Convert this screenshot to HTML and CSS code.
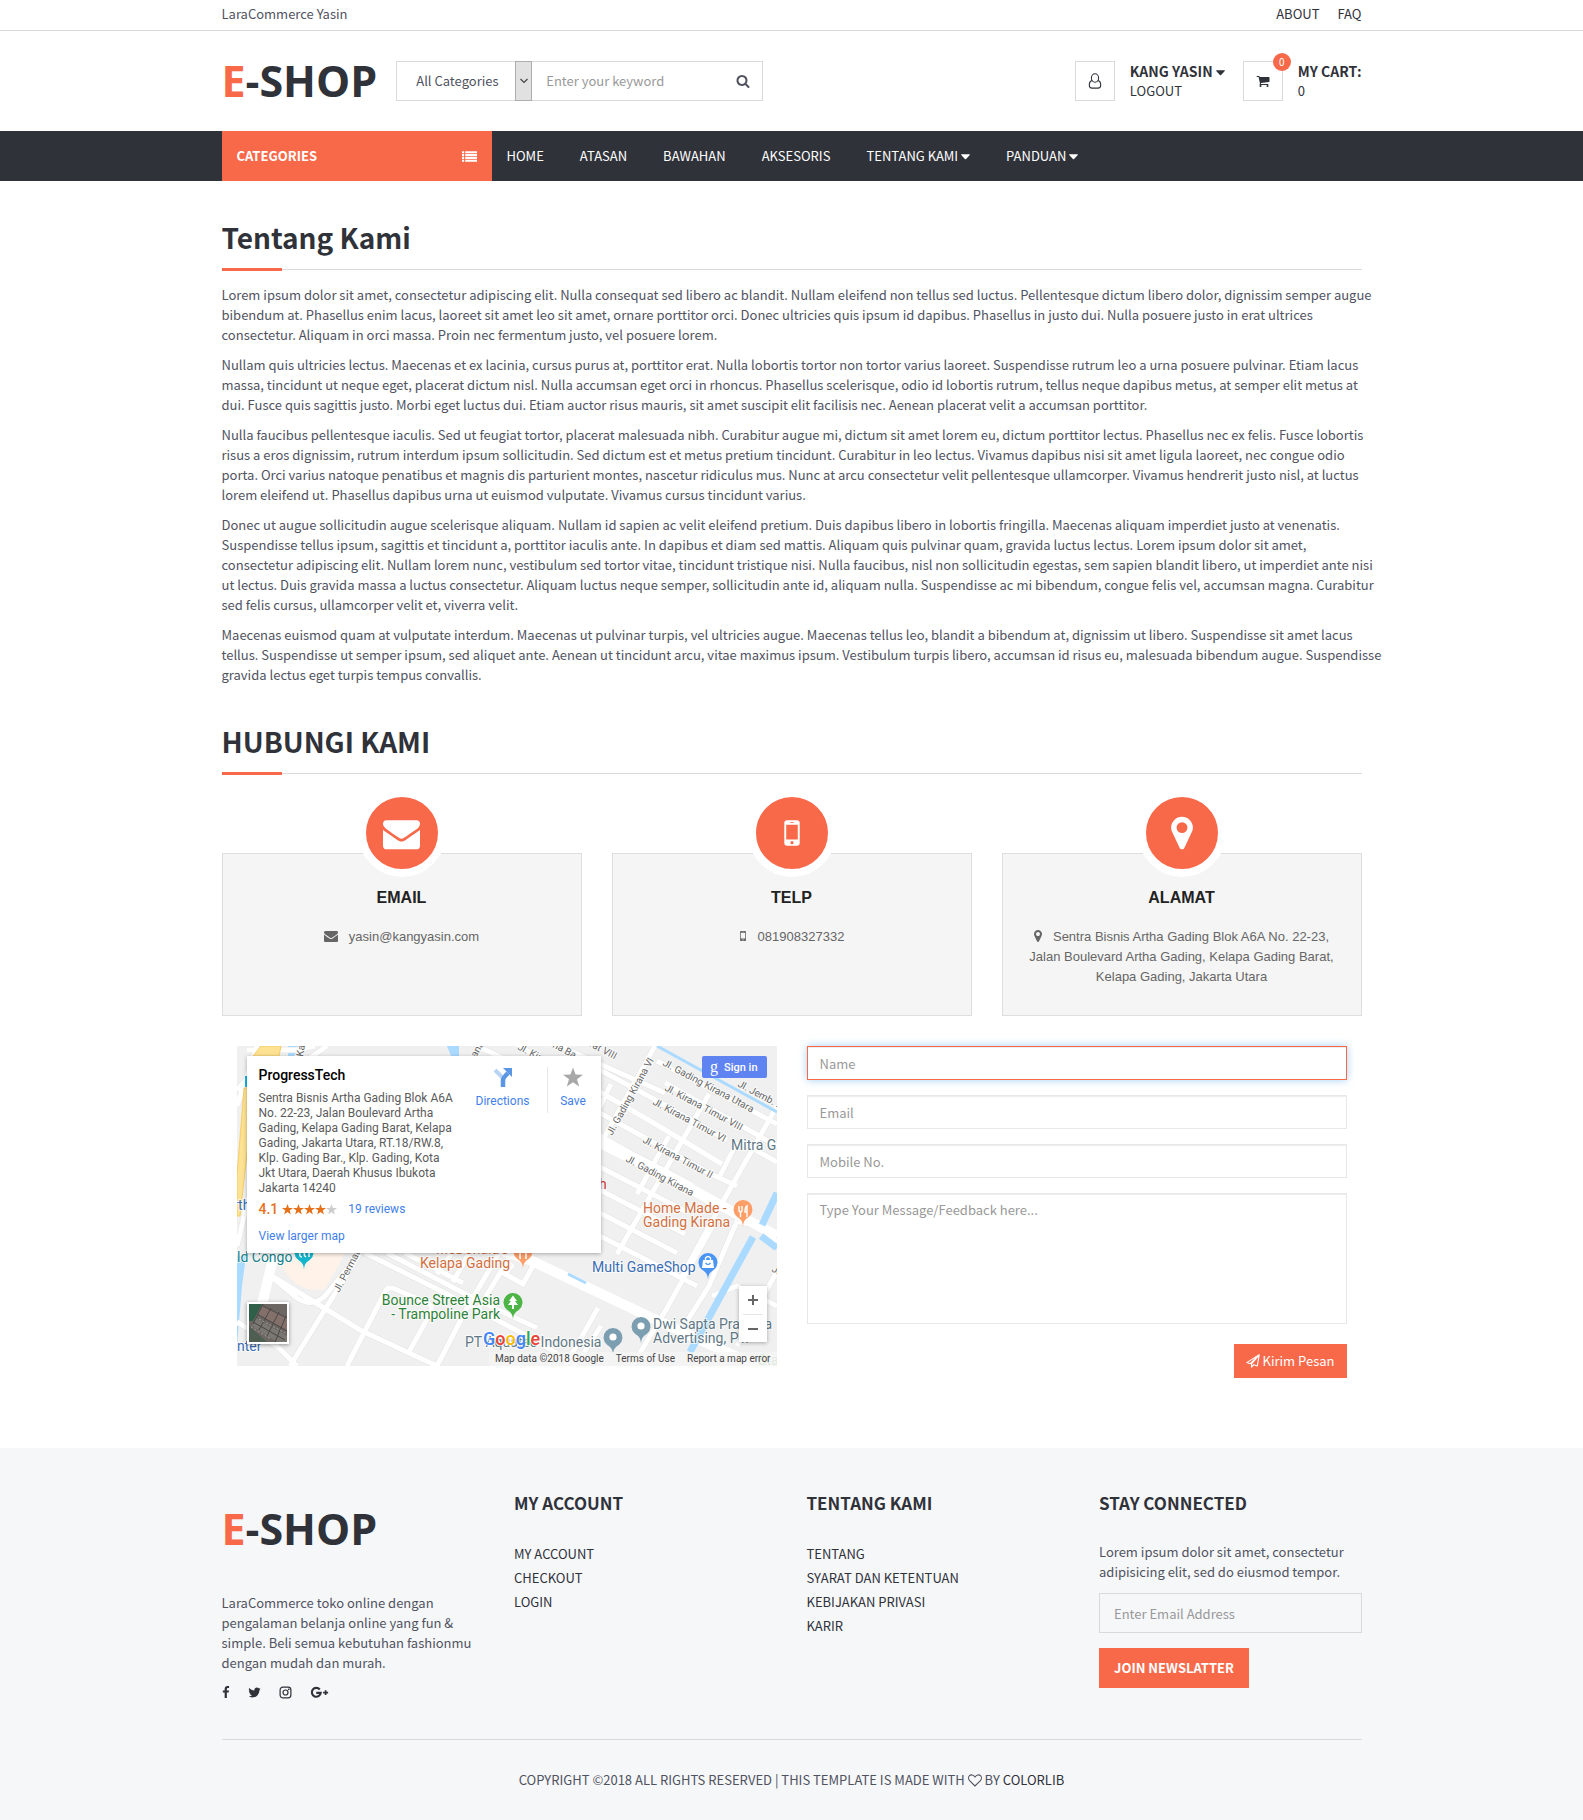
FILE: index.html
```html
<!DOCTYPE html>
<html lang="id">
<head>
<meta charset="utf-8">
<meta name="viewport" content="width=device-width, initial-scale=1">
<title>E-SHOP | Tentang Kami</title>
<link rel="stylesheet" href="styles.css">
</head>
<body>
<svg class="sprite" aria-hidden="true">
  <symbol id="i-search" viewBox="0 0 1792 1792"><path d="M1216 832q0-185-131.500-316.500t-316.500-131.500-316.500 131.500-131.500 316.500 131.500 316.500 316.500 131.500 316.500-131.500 131.500-316.500zm512 832q0 52-38 90t-90 38q-54 0-90-38l-343-342q-179 124-399 124-143 0-273.500-55.500t-225-150-150-225-55.500-273.500 55.500-273.500 150-225 225-150 273.500-55.500 273.500 55.500 225 150 150 225 55.500 273.500q0 220-124 399l343 343q37 37 37 90z"/></symbol>
  <symbol id="i-cart" viewBox="0 0 1792 1792"><path d="M704 1536q0 52-38 90t-90 38-90-38-38-90 38-90 90-38 90 38 38 90zm896 0q0 52-38 90t-90 38-90-38-38-90 38-90 90-38 90 38 38 90zm128-1088v512q0 24-16.500 42.500t-40.500 21.500l-1044 122q13 60 13 70 0 16-24 64h920q26 0 45 19t19 45-19 45-45 19h-1024q-26 0-45-19t-19-45q0-11 8-31.500t16-36 21.500-40 15.500-29.500l-177-823h-204q-26 0-45-19t-19-45 19-45 45-19h256q16 0 28.500 6.500t19.500 15.500 13 24.500 8 26 5.500 29.500 4.500 26h1201q26 0 45 19t19 45z"/></symbol>
  <symbol id="i-envelope" viewBox="0 0 1792 1792"><path d="M1792 710v794q0 66-47 113t-113 47h-1472q-66 0-113-47t-47-113v-794q44 49 101 87 362 246 497 345 57 42 92.500 65.500t94.500 48 110 24.500h2q51 0 110-24.500t94.500-48 92.500-65.500q170-123 498-345 57-39 100-87zm0-294q0 79-49 151t-122 123q-376 261-468 325-10 7-42.500 30.500t-54 38-52 32.500-57.500 27-50 9h-2q-23 0-50-9t-57.500-27-52-32.500-54-38-42.500-30.500q-91-64-262-182.500t-205-142.500q-62-42-117-115.500t-55-136.500q0-78 41.500-130t118.500-52h1472q65 0 112.500 47t47.500 113z"/></symbol>
  <symbol id="i-marker" viewBox="0 0 1792 1792"><path d="M1152 640q0-106-75-181t-181-75-181 75-75 181 75 181 181 75 181-75 75-181zm256 0q0 109-33 179l-364 774q-16 33-47.500 52t-67.500 19-67.500-19-46.500-52l-365-774q-33-70-33-179 0-212 150-362t362-150 362 150 150 362z"/></symbol>
  <symbol id="i-mobile" viewBox="0 0 1792 1792"><path fill-rule="evenodd" d="M640 256h512q52 0 90 38t38 90v1024q0 52-38 90t-90 38h-512q-52 0-90-38t-38-90v-1024q0-52 38-90t90-38zm-16 224q-16 0-16 16v704q0 16 16 16h544q16 0 16-16v-704q0-16-16-16zm272 816a80 80 0 1 0 0 160 80 80 0 1 0 0-160zm-80-944q-16 0-16 16t16 16h160q16 0 16-16t-16-16z"/></symbol>
  <symbol id="i-list" viewBox="0 0 14 10"><path d="M0 0h2v2H0zM3 0h11v2H3zM0 2.700h2v2H0zM3 2.700h11v2H3zM0 5.400h2v2H0zM3 5.400h11v2H3zM0 8h2v2H0zM3 8h11v2H3z"/></symbol>
  <symbol id="i-caret" viewBox="0 0 8 5"><path d="M.5 0h7q.7.2.3.8L4.500 4.300q-.5.400-1 0L.2.800Q-.2.200.5 0z"/></symbol>
  <symbol id="i-user" viewBox="0 0 14 16"><g fill="none" stroke="currentColor" stroke-width="1.100"><ellipse cx="7" cy="5" rx="3.600" ry="4.200"/><path d="M4.200 7.600C2.300 7.800 1.300 9.600 1.300 12.200c0 1.700 1 2.900 2.700 2.900h6c1.700 0 2.700-1.200 2.700-2.900 0-2.600-1-4.400-2.900-4.600"/></g></symbol>
  <symbol id="i-facebook" viewBox="480 0 880 1792"><path d="M1343 12v264h-157q-86 0-116 36t-30 108v189h293l-39 296h-254v759h-306v-759h-255v-296h255v-218q0-186 104-288.500t277-102.500q147 0 228 12z"/></symbol>
  <symbol id="i-twitter" viewBox="64 192 1664 1408"><path d="M1684 408q-67 98-162 167 1 14 1 42 0 130-38 259.500t-115.500 248.500-184.500 210.500-258 146-323 54.500q-271 0-496-145 35 4 78 4 225 0 401-138-105-2-188-64.500t-114-159.500q33 5 61 5 43 0 85-11-112-23-185.500-111.500t-73.500-205.500v-4q68 38 146 41-66-44-105-115t-39-154q0-88 44-163 121 149 294.500 238.500t371.500 99.500q-8-38-8-74 0-134 94.500-228.500t228.500-94.500q140 0 236 102 109-21 205-78-37 115-142 178 93-10 186-50z"/></symbol>
  <symbol id="i-instagram" viewBox="0 0 14 14"><g fill="none" stroke="currentColor" stroke-width="1.300"><rect x="1.200" y="1.200" width="11.600" height="11.600" rx="3"/><circle cx="7" cy="7" r="2.700"/></g><circle cx="10.500" cy="3.600" r=".9"/></symbol>
  <symbol id="i-gplus" viewBox="0 0 20 14"><path d="M10.300 3.800A4.800 4.800 0 1 0 11.300 7.400H6.500" fill="none" stroke="currentColor" stroke-width="2.300"/><path d="M15.700 4.500h1.800v1.800h1.800v1.700h-1.800v1.800h-1.800V8h-1.800V6.300h1.800z"/></symbol>
  <symbol id="i-heart" viewBox="0 0 14 13"><path d="M7 12 1.600 6.700C.2 5.200.300 2.900 1.500 1.700 3 .3 5.300.600 7 3 8.700.600 11 .300 12.500 1.700c1.200 1.200 1.300 3.500-.1 5z" fill="none" stroke="currentColor" stroke-width="1.100"/></symbol>
  <symbol id="i-plane" viewBox="0 0 14 14"><path d="M.8 8.600 13.200.8 11.300 12 7.800 10.700 5.600 13.200V9.800L13.200.8 4.200 9.700z" fill="none" stroke="currentColor" stroke-width="1.100" stroke-linejoin="round"/></symbol>
</svg>

<div class="topbar">
  <div class="container topbar-row">
    <span>LaraCommerce Yasin</span>
    <nav class="top-links"><a href="#">ABOUT</a><a href="#">FAQ</a></nav>
  </div>
</div>

<header class="container header">
  <a class="logo" href="#"><span>E</span>-SHOP</a>
  <form class="search">
    <label class="sr" for="cat">Kategori</label>
    <div class="search-cat">
      <select id="cat"><option>All Categories</option></select>
      <span class="search-arrow"><svg width="8" height="6" viewBox="0 0 8 6"><path d="M.5 1 4 4.500 7.500 1" fill="none" stroke="#444" stroke-width="1.200"/></svg></span>
    </div>
    <label class="sr" for="q">Kata kunci</label>
    <input id="q" type="text" placeholder="Enter your keyword">
    <button type="button" aria-label="Search"><svg width="14" height="14"><use href="#i-search"/></svg></button>
  </form>
  <div class="account">
    <div class="account-item">
      <a class="icon-box" href="#" aria-label="Account"><svg width="14" height="16"><use href="#i-user"/></svg></a>
      <div><a class="strong" href="#">KANG YASIN <svg class="caret" width="9" height="6"><use href="#i-caret"/></svg></a><a href="#">LOGOUT</a></div>
    </div>
    <div class="account-item">
      <a class="icon-box" href="#" aria-label="Cart"><svg width="14" height="14"><use href="#i-cart"/></svg><span class="badge">0</span></a>
      <div><a class="strong" href="#">MY CART:</a><span>0</span></div>
    </div>
  </div>
</header>

<div class="navbar">
  <div class="container navbar-row">
    <a class="nav-cat" href="#">CATEGORIES <svg width="15" height="11"><use href="#i-list"/></svg></a>
    <nav class="nav-links">
      <a href="#">HOME</a><a href="#">ATASAN</a><a href="#">BAWAHAN</a><a href="#">AKSESORIS</a>
      <a href="#">TENTANG KAMI <svg class="caret" width="9" height="6"><use href="#i-caret"/></svg></a>
      <a href="#">PANDUAN <svg class="caret" width="9" height="6"><use href="#i-caret"/></svg></a>
    </nav>
  </div>
</div>

<main class="container main">
  <h2 class="title">Tentang Kami</h2>
  <div class="prose">
    <p>Lorem ipsum dolor sit amet, consectetur adipiscing elit. Nulla consequat sed libero ac blandit. Nullam eleifend non tellus sed luctus. Pellentesque dictum libero dolor, dignissim semper augue<br>bibendum at. Phasellus enim lacus, laoreet sit amet leo sit amet, ornare porttitor orci. Donec ultricies quis ipsum id dapibus. Phasellus in justo dui. Nulla posuere justo in erat ultrices<br>consectetur. Aliquam in orci massa. Proin nec fermentum justo, vel posuere lorem.</p>
    <p>Nullam quis ultricies lectus. Maecenas et ex lacinia, cursus purus at, porttitor erat. Nulla lobortis tortor non tortor varius laoreet. Suspendisse rutrum leo a urna posuere pulvinar. Etiam lacus<br>massa, tincidunt ut neque eget, placerat dictum nisl. Nulla accumsan eget orci in rhoncus. Phasellus scelerisque, odio id lobortis rutrum, tellus neque dapibus metus, at semper elit metus at<br>dui. Fusce quis sagittis justo. Morbi eget luctus dui. Etiam auctor risus mauris, sit amet suscipit elit facilisis nec. Aenean placerat velit a accumsan porttitor.</p>
    <p>Nulla faucibus pellentesque iaculis. Sed ut feugiat tortor, placerat malesuada nibh. Curabitur augue mi, dictum sit amet lorem eu, dictum porttitor lectus. Phasellus nec ex felis. Fusce lobortis<br>risus a eros dignissim, rutrum interdum ipsum sollicitudin. Sed dictum est et metus pretium tincidunt. Curabitur in leo lectus. Vivamus dapibus nisi sit amet ligula laoreet, nec congue odio<br>porta. Orci varius natoque penatibus et magnis dis parturient montes, nascetur ridiculus mus. Nunc at arcu consectetur velit pellentesque ullamcorper. Vivamus hendrerit justo nisl, at luctus<br>lorem eleifend ut. Phasellus dapibus urna ut euismod vulputate. Vivamus cursus tincidunt varius.</p>
    <p>Donec ut augue sollicitudin augue scelerisque aliquam. Nullam id sapien ac velit eleifend pretium. Duis dapibus libero in lobortis fringilla. Maecenas aliquam imperdiet justo at venenatis.<br>Suspendisse tellus ipsum, sagittis et tincidunt a, porttitor iaculis ante. In dapibus et diam sed mattis. Aliquam quis pulvinar quam, gravida luctus lectus. Lorem ipsum dolor sit amet,<br>consectetur adipiscing elit. Nullam lorem nunc, vestibulum sed tortor vitae, tincidunt tristique nisi. Nulla faucibus, nisl non sollicitudin egestas, sem sapien blandit libero, ut imperdiet ante nisi<br>ut lectus. Duis gravida massa a luctus consectetur. Aliquam luctus neque semper, sollicitudin ante id, aliquam nulla. Suspendisse ac mi bibendum, congue felis vel, accumsan magna. Curabitur<br>sed felis cursus, ullamcorper velit et, viverra velit.</p>
    <p>Maecenas euismod quam at vulputate interdum. Maecenas ut pulvinar turpis, vel ultricies augue. Maecenas tellus leo, blandit a bibendum at, dignissim ut libero. Suspendisse sit amet lacus<br>tellus. Suspendisse ut semper ipsum, sed aliquet ante. Aenean ut tincidunt arcu, vitae maximus ipsum. Vestibulum turpis libero, accumsan id risus eu, malesuada bibendum augue. Suspendisse<br>gravida lectus eget turpis tempus convallis.</p>
  </div>

  <h2 class="title title-second">HUBUNGI KAMI</h2>
  <div class="cards">
    <section class="card">
      <div class="disc"><svg width="37" height="37"><use href="#i-envelope"/></svg></div>
      <h3>EMAIL</h3>
      <p><svg width="14" height="14"><use href="#i-envelope"/></svg>yasin@kangyasin.com</p>
    </section>
    <section class="card">
      <div class="disc"><svg width="36" height="36"><use href="#i-mobile"/></svg></div>
      <h3>TELP</h3>
      <p><svg class="narrow" width="14" height="14"><use href="#i-mobile"/></svg>081908327332</p>
    </section>
    <section class="card">
      <div class="disc"><svg width="38" height="38"><use href="#i-marker"/></svg></div>
      <h3>ALAMAT</h3>
      <p><svg class="narrow" width="14" height="14"><use href="#i-marker"/></svg>Sentra Bisnis Artha Gading Blok A6A No. 22-23, Jalan Boulevard Artha Gading, Kelapa Gading Barat, Kelapa Gading, Jakarta Utara</p>
    </section>
  </div>

  <div class="contact">
    <div class="map">
      <svg class="map-art" viewBox="0 0 540 320" preserveAspectRatio="xMidYMid slice">
        <defs>
          <symbol id="pin" viewBox="0 0 20 27" overflow="visible"><path d="M10 26.500C9.600 21 7.800 19.200 4 16.800A9.500 9.500 0 1 1 16 16.800C12.200 19.200 10.400 21 10 26.500z"/></symbol>
          <g id="roads">
            <path d="M123 207 53 320M30 227 123 284 200 320M123 207 88 250Q75 262 60 252L30 227"/>
            <path d="M128 207 210 248 300 295 340 320M150 207 240 254 300 282M110 320 148 246Q150 240 158 243L192 258Q196 261 194 266L172 306M0 276 40 300 60 320"/>
            <path d="M168 207 226 237M215 207 200 228M232 207 216 236M262 207 230 262 200 320M272 212 242 262M276 218 268 228 286 238 296 220"/>
            <path d="M0 60 20 0M0 200 12 150M10 4H60L78 0M70 14 90 0M0 44 40 0"/>
            <path d="M300-10 428 47M420 15 540 78M428 37 540 100M363 24 415 52 490 94M363 46 415 76 485 118M363 67 405 90 474 128 500 140"/>
            <path d="M363 90 388 104 455 139M363 121 450 166M363 144 448 188M363 167 440 207M363 190 460 240M280 0 363 40M240 0 300 28"/>
            <path d="M418 0 364 97M374 38 350 88M472 48 380 208M500 96 482 132M540 60 480 166 445 230M504 96 540 116M432 90 400 148"/>
            <path d="M480 172 430 262 395 320M540 196 520 180 500 175 472 240 450 275M364 280 345 310M361 262 328 320M540 260 500 240 475 250M540 225 500 300"/>
          </g>
        </defs>
        <rect width="540" height="320" fill="#f0f0f0"/>
        <path d="M77 207h30l-3 8-16 28q-20 4-34-10l-12-16z" fill="#fff2e8"/>
        <path d="M0 210h9l-4 30-5 60zM51 0h12l-6 10h-6zM210 0h12v10h-8z" fill="#aadaff"/>
        <use href="#roads" fill="none" stroke="#e3e3e3" stroke-width="6"/>
        <use href="#roads" fill="none" stroke="#fff" stroke-width="5"/>
        <path d="M363 97 443 137 540 190M293 214 413 271 463 294 520 320M38 204 14 305M250 200 293 214" fill="none" stroke="#fff" stroke-width="10"/>
        <path d="M11 42V98L3 170H0V130L7 42zM16 10 24 0H44L42 10z" fill="#fde293" stroke="#f6cd67"/>
        <path d="M540 147 525 179M516 191 453 306M524 190 540 202" fill="none" stroke="#aadaff" stroke-width="7"/>
        <path d="M420 0 540 66M331 228 349 237" fill="none" stroke="#aadaff" stroke-width="3"/>
        <path d="M8 30h3v11H8z" fill="#13b5ea"/>
        <g class="street">
          <text transform="translate(375 90) rotate(-61)">Jl. Gading Kirana VI</text>
          <text transform="translate(425 19) rotate(28)">Jl. Gading Kirana Utara</text>
          <text transform="translate(427 44) rotate(28)">Jl. Kirana Timur VIII</text>
          <text transform="translate(415 58) rotate(28)">Jl. Kirana Timur VI</text>
          <text transform="translate(405 96) rotate(28)">Jl. Kirana Timur II</text>
          <text transform="translate(388 115) rotate(28)">Jl. Gading Kirana</text>
          <text transform="translate(500 40) rotate(28)">Jl. Jemb. ..</text>
          <text transform="translate(102 247) rotate(-62)">Jl. Permata</text>
          <text transform="translate(280 3) rotate(28)">Jl. Kir</text>
          <text transform="translate(315 1) rotate(28)">na Ba</text>
          <text transform="translate(352 0) rotate(28)">rat VIII</text>
          <text transform="translate(66 11) rotate(-80)">Kay</text>
          <text transform="translate(239 12) rotate(-60)">ana</text>
          <text transform="translate(534 225) rotate(28)">Jl</text>
        </g>
        <g class="place">
          <g fill="#d2703f"><text x="406" y="167">Home Made -</text><text x="406" y="181">Gading Kirana</text><text x="199" y="208">McDonald's</text><text x="183" y="222">Kelapa Gading</text></g>
          <g fill="#3a6db5"><text x="355" y="226">Multi GameShop</text><text x="0" y="305">nter</text><text x="-4" y="164">rth</text></g>
          <g fill="#2d8237"><text x="263" y="259" text-anchor="end">Bounce Street Asia</text><text x="263" y="273" text-anchor="end">- Trampoline Park</text></g>
          <g fill="#5f7885"><text x="494" y="104">Mitra G</text><text x="416" y="283">Dwi Sapta Pratama</text><text x="416" y="297">Advertising, PT.</text><text x="228" y="301">PT Aquatec Indonesia</text></g>
          <text x="0" y="216" fill="#14808b">ld Congo</text>
          <text x="362" y="143" fill="#c5322d">h</text>
          <text x="521" y="319" fill="#a5cfa9">Sta</text>
        </g>
        <use href="#pin" x="496" y="154" width="20" height="27" fill="#ff9e67"/>
        <path d="M502 160v4q0 2 1.500 2v5M505 160v4q0 2-1.500 2M510 171v-11q-2 1-2 6h2" fill="none" stroke="#fff" stroke-width="1.400"/>
        <use href="#pin" x="276" y="196" width="20" height="27" fill="#ff9e67"/>
        <path d="M283 202v11M289 202v11" stroke="#fff" stroke-width="1.600"/>
        <use href="#pin" x="461" y="207" width="20" height="27" fill="#4a94f3"/>
        <path d="M466 214h10l1 8h-12z" fill="#fff"/><path d="M468.500 214v-2q2.500-3 5 0v2" fill="none" stroke="#fff" stroke-width="1.300"/><path d="M468.500 217q2.500 3 5 0" fill="none" stroke="#4a94f3" stroke-width="1.200"/>
        <use href="#pin" x="266" y="247" width="20" height="27" fill="#4db546"/>
        <path d="M276 249.500 280 255h-2l3 4h-4v4h-2v-4h-4l3-4h-2z" fill="#fff"/>
        <use href="#pin" x="394" y="271" width="20" height="27" fill="#7b9eb0"/><circle cx="404" cy="280" r="3.600" fill="#fff"/>
        <use href="#pin" x="366" y="282" width="20" height="27" fill="#7b9eb0"/><circle cx="376" cy="291" r="3.600" fill="#fff"/>
        <use href="#pin" x="57" y="197" width="20" height="27" fill="#12b5cb"/><path d="M63 207q-1 4 2 4m3-5q-2 3 1 5m3-5v5" fill="none" stroke="#fff" stroke-width="1.500"/>
        <g class="glogo"><text x="246" y="299"><tspan fill="#4285f4">G</tspan><tspan fill="#ea4335">o</tspan><tspan fill="#fbbc05">o</tspan><tspan fill="#4285f4">g</tspan><tspan fill="#34a853">l</tspan><tspan fill="#ea4335">e</tspan></text></g>
      </svg>

      <div class="place-card">
        <div class="place-info">
          <h3>ProgressTech</h3>
          <p>Sentra Bisnis Artha Gading Blok A6A<br>No. 22-23, Jalan Boulevard Artha<br>Gading, Kelapa Gading Barat, Kelapa<br>Gading, Jakarta Utara, RT.18/RW.8,<br>Klp. Gading Bar., Klp. Gading, Kota<br>Jkt Utara, Daerah Khusus Ibukota<br>Jakarta 14240</p>
          <div class="rating"><b>4.1</b>
            <svg width="55" height="11" viewBox="0 0 55 11"><defs><path id="star" d="M5.500 0 6.900 3.900 11 4 7.700 6.500 8.900 10.500 5.500 8.100 2.100 10.500 3.300 6.500 0 4 4.100 3.900z"/></defs><g fill="#e7711b"><use href="#star"/><use href="#star" x="11"/><use href="#star" x="22"/><use href="#star" x="33"/></g><use href="#star" x="44" fill="#ccc"/></svg>
            <a href="#">19 reviews</a>
          </div>
          <a href="#">View larger map</a>
        </div>
        <a class="place-action" href="#"><svg width="20" height="20" viewBox="0 0 20 20"><path d="M2 3 10 11" stroke="#b9d3f5" stroke-width="4"/><path d="M10 20v-7q0-2 5-7" fill="none" stroke="#5a96e3" stroke-width="4.500"/><path d="M10 1h9v9z" fill="#5a96e3"/></svg>Directions</a>
        <a class="place-action place-save" href="#"><svg width="20" height="20" viewBox="0 0 11 10.500"><use href="#star" fill="#a8a8a8"/></svg>Save</a>
      </div>
      <button class="signin" type="button"><span>g</span>Sign in</button>
      <div class="map-zoom"><button type="button" aria-label="Zoom in"><svg width="10" height="10"><path d="M5 0v10M0 5h10" stroke="#666" stroke-width="2"/></svg></button><button type="button" aria-label="Zoom out"><svg width="10" height="10"><path d="M0 5h10" stroke="#666" stroke-width="2"/></svg></button></div>
      <svg class="satellite" width="38" height="38" viewBox="0 0 38 38" aria-hidden="true"><rect width="38" height="38" fill="#6d6763"/><path d="M0 0h13L4 17H0z" fill="#2f5f47"/><path d="M14 2 38 14v12L8 10z" fill="#83706b"/><path d="M6 14 38 32v6H28L3 22z" fill="#7a7671"/><path d="M0 22 18 38H0z" fill="#4e5f52"/><path d="M14 0 4 20M22 4 10 26M30 8 18 32M37 12 26 38M8 10 38 27M4 18 36 36M14 2 38 14" stroke="#4a4745" stroke-width="1"/><path d="M10 15 36 29M2 23 22 35" stroke="#a39d98" stroke-width="1" stroke-dasharray="2 2"/></svg>
      <div class="map-legal"><span>Map data ©2018 Google</span><a href="#">Terms of Use</a><a href="#">Report a map error</a></div>
    </div>

    <form class="message">
      <label class="sr" for="name">Name</label><input class="field is-active" id="name" type="text" placeholder="Name">
      <label class="sr" for="email">Email</label><input class="field" id="email" type="email" placeholder="Email">
      <label class="sr" for="mobile">Mobile No.</label><input class="field" id="mobile" type="text" placeholder="Mobile No.">
      <label class="sr" for="msg">Message</label><textarea class="field" id="msg" placeholder="Type Your Message/Feedback here..."></textarea>
      <button class="send" type="button"><svg width="14" height="14"><use href="#i-plane"/></svg> Kirim Pesan</button>
    </form>
  </div>
</main>

<footer class="footer">
  <div class="container">
    <div class="footer-cols">
      <section class="about">
        <a class="logo" href="#"><span>E</span>-SHOP</a>
        <p>LaraCommerce toko online dengan<br>pengalaman belanja online yang fun &amp;<br>simple. Beli semua kebutuhan fashionmu<br>dengan mudah dan murah.</p>
        <div class="social">
          <a href="#" aria-label="Facebook"><svg width="8" height="13"><use href="#i-facebook"/></svg></a>
          <a href="#" aria-label="Twitter"><svg width="13" height="11"><use href="#i-twitter"/></svg></a>
          <a href="#" aria-label="Instagram"><svg width="13" height="13"><use href="#i-instagram"/></svg></a>
          <a href="#" aria-label="Google Plus"><svg width="19" height="13"><use href="#i-gplus"/></svg></a>
        </div>
      </section>
      <section><h3>MY ACCOUNT</h3><ul><li><a href="#">MY ACCOUNT</a></li><li><a href="#">CHECKOUT</a></li><li><a href="#">LOGIN</a></li></ul></section>
      <section><h3>TENTANG KAMI</h3><ul><li><a href="#">TENTANG</a></li><li><a href="#">SYARAT DAN KETENTUAN</a></li><li><a href="#">KEBIJAKAN PRIVASI</a></li><li><a href="#">KARIR</a></li></ul></section>
      <section>
        <h3>STAY CONNECTED</h3>
        <p>Lorem ipsum dolor sit amet, consectetur<br>adipisicing elit, sed do eiusmod tempor.</p>
        <form class="newsletter"><label class="sr" for="news">Email</label><input id="news" type="email" placeholder="Enter Email Address"><button type="button">JOIN NEWSLATTER</button></form>
      </section>
    </div>
    <p class="copyright">COPYRIGHT ©2018 ALL RIGHTS RESERVED | THIS TEMPLATE IS MADE WITH <svg width="14" height="13"><use href="#i-heart"/></svg> BY <a href="#">COLORLIB</a></p>
  </div>
</footer>
</body>
</html>
```
FILE: styles.css
```css
:root {
  --primary: #f8694a;
  --dark: #30323a;
  --text: #50535f;
  --line: #dadada;
  --sans: "Noto Sans CJK SC", "Noto Sans", sans-serif;
}

* { box-sizing: border-box; }

body {
  margin: 0;
  background: #fff;
  color: var(--text);
  font-family: var(--sans);
  font-size: 13px;
  line-height: 20px;
}

h2, h3, p, ul { margin: 0; }
ul { padding: 0; list-style: none; }
a { color: var(--dark); text-decoration: none; }
svg { fill: currentColor; }
input, select, textarea, button { font: inherit; color: inherit; border-radius: 0; }
button { border: 0; padding: 0; background: none; cursor: pointer; }
::placeholder { color: #999; opacity: 1; }

.sprite, .sr {
  position: absolute;
  width: 1px;
  height: 1px;
  overflow: hidden;
  clip-path: inset(50%);
}

.container {
  max-width: 1170px;
  margin: 0 auto;
  padding: 0 15px;
}

.caret { vertical-align: middle; }

/* Top bar */
.topbar { border-bottom: 1px solid var(--line); }
.topbar-row { display: flex; justify-content: space-between; padding-top: 4px; padding-bottom: 6px; }
.top-links { display: flex; gap: 18px; }

/* Header */
.header { display: flex; align-items: center; height: 100px; }

.logo {
  color: var(--dark);
  font: 700 43px/60px "Open Sans", sans-serif;
}
.logo span { color: var(--primary); }

.search {
  display: flex;
  width: 367px;
  height: 40px;
  margin-left: 19px;
  border: 1px solid var(--line);
}
.search-cat { position: relative; width: 135px; margin: -1px 0; }
.search select {
  appearance: none;
  width: 100%;
  height: 100%;
  padding: 0 18px 0 19px;
  border: solid var(--line);
  border-width: 1px 0;
  background: #fff;
}
.search-arrow {
  position: absolute;
  top: 0;
  right: 0;
  display: flex;
  align-items: center;
  justify-content: center;
  width: 17px;
  height: 40px;
  border: 1px solid #adadad;
  background: #e1e1e1;
  pointer-events: none;
}
.search input { flex: 1; min-width: 0; padding: 0 14px; border: 0; background: none; }
.search button { display: flex; align-items: center; justify-content: center; width: 38px; }

.account { display: flex; gap: 18px; margin-left: auto; }
.account-item { display: flex; gap: 15px; color: var(--dark); }
.account-item a, .account-item div span { display: block; }
.account-item .strong { font-size: 14px; font-weight: 700; }
.account-item .icon-box {
  position: relative;
  display: flex;
  align-items: center;
  justify-content: center;
  width: 40px;
  height: 40px;
  border: 1px solid var(--line);
}
.badge {
  position: absolute;
  top: -9px;
  right: -9px;
  width: 18px;
  height: 18px;
  border-radius: 50%;
  background: var(--primary);
  color: #fff;
  font-size: 10px;
  line-height: 18px;
  text-align: center;
}

/* Navigation */
.navbar { background: var(--dark); }
.navbar-row { display: flex; align-items: stretch; }
.navbar a { color: #fff; }
.nav-cat {
  display: flex;
  align-items: center;
  justify-content: space-between;
  width: 270px;
  padding: 15px;
  font-weight: 700;
}
.navbar .nav-cat { background: var(--primary); }
.nav-links { display: flex; align-items: center; gap: 36px; padding-left: 15px; }

/* Page body */
.main { padding-top: 37px; padding-bottom: 70px; }

.title {
  position: relative;
  padding-bottom: 12px;
  margin-bottom: 15px;
  border-bottom: 1px solid var(--line);
  color: var(--dark);
  font-size: 28px;
  line-height: 39px;
}
.title::after {
  content: "";
  position: absolute;
  left: 0;
  bottom: -2px;
  width: 60px;
  height: 3px;
  background: var(--primary);
}
.title-second { margin-top: 37px; }

/* The text block runs slightly past the column */
.prose { margin-right: -20px; }
.prose p + p { margin-top: 10px; }

.cards {
  display: grid;
  grid-template-columns: repeat(3, 1fr);
  gap: 30px;
  margin-top: 79px;
}
.card {
  padding: 0 25px 28px;
  border: 1px solid #dedede;
  background: #f5f5f5;
  color: #666;
  font-family: "Liberation Sans", Arial, sans-serif;
  text-align: center;
}
.disc {
  display: flex;
  align-items: center;
  justify-content: center;
  width: 88px;
  height: 88px;
  margin: -65px auto 11px;
  border: 8px solid #fff;
  border-radius: 50%;
  background: var(--primary);
  color: #fff;
}
.card h3 { margin-bottom: 19px; color: #222; font-size: 16px; line-height: 20px; }
.card p svg { margin-right: 11px; vertical-align: -2px; }
.card p .narrow { margin-left: -3px; margin-right: 8px; }

.contact {
  display: grid;
  grid-template-columns: 1fr 1fr;
  gap: 30px;
  margin-top: 30px;
  padding: 0 15px;
}

/* Map */
.map {
  position: relative;
  height: 320px;
  overflow: hidden;
  font-family: Roboto, sans-serif;
  font-size: 12px;
  line-height: 15px;
}
.map a { color: #427fed; }
.map-art { display: block; width: 100%; height: 100%; }
.map-art text { stroke: #fff; stroke-width: 2px; stroke-opacity: .7; paint-order: stroke; }
.street { font-size: 10px; fill: #666; }
.place { font-size: 14px; }
.glogo { font-size: 18px; font-weight: 500; }

.place-card {
  position: absolute;
  top: 10px;
  left: 10px;
  display: flex;
  width: 354px;
  height: 197px;
  padding: 11px 2px 0 12px;
  background: #fff;
  box-shadow: 0 1px 4px rgba(0, 0, 0, .3);
  color: #5b5b5b;
}
.place-info { width: 208px; }
.place-info h3 { margin-bottom: 8px; color: #000; font-size: 14px; font-weight: 500; line-height: 16px; }
.rating { display: flex; align-items: center; gap: 4px; margin: 6px 0 12px; }
.rating b { color: #e7711b; font-size: 14px; font-weight: 500; }
.rating a { margin-left: 7px; }
.place-action { display: flex; flex-direction: column; align-items: center; gap: 7px; width: 72px; }
.place-save { flex: 1; height: 46px; margin-left: 8px; border-left: 1px solid #e8e8e8; }
.place-action svg { flex: none; }

.signin {
  position: absolute;
  top: 10px;
  right: 10px;
  display: flex;
  align-items: center;
  gap: 6px;
  height: 22px;
  padding: 0 9px 0 8px;
  border-radius: 2px;
  background: #5f84f2;
  color: #fff;
  font-size: 11px;
  font-weight: 500;
}
.signin span { font: 16px/16px "Liberation Serif", serif; }

.map-zoom {
  position: absolute;
  right: 10px;
  bottom: 24px;
  width: 28px;
  padding: 0 4px;
  background: #fff;
  box-shadow: 0 1px 4px rgba(0, 0, 0, .3);
}
.map-zoom button { display: flex; align-items: center; justify-content: center; width: 100%; height: 28px; }
.map-zoom button + button { border-top: 1px solid #e6e6e6; }

.satellite {
  position: absolute;
  left: 10px;
  bottom: 22px;
  width: 42px;
  height: 42px;
  border: 2px solid #fff;
  box-shadow: 0 1px 4px rgba(0, 0, 0, .4);
}

.map-legal {
  position: absolute;
  right: 0;
  bottom: 0;
  display: flex;
  gap: 12px;
  height: 14px;
  padding: 0 6px;
  background: rgba(245, 245, 245, .7);
  color: #444;
  font-size: 10px;
  line-height: 14px;
}
.map-legal a { color: #444; }

/* Message form */
.message { display: flex; flex-direction: column; gap: 15px; }
.field {
  width: 100%;
  height: 34px;
  padding: 6px 12px;
  border: 1px solid #e8e8e8;
  background: #fff;
  box-shadow: inset 0 1px 1px rgba(0, 0, 0, .075);
}
.is-active {
  border-color: var(--primary);
  box-shadow: inset 0 1px 1px rgba(0, 0, 0, .075), 0 0 8px rgba(102, 175, 233, .6);
}
textarea.field { display: block; height: 131px; resize: none; }
.send {
  display: flex;
  align-items: center;
  align-self: flex-end;
  gap: 3px;
  height: 34px;
  margin-top: 5px;
  padding: 0 12px;
  background: var(--primary);
  color: #fff;
}

/* Footer */
.footer { background: #f6f7f9; padding: 43px 0 30px; }
.footer-cols {
  display: grid;
  grid-template-columns: repeat(4, 1fr);
  gap: 30px;
  padding-bottom: 39px;
  border-bottom: 1px solid var(--line);
}
.footer h3 { margin-bottom: 27px; color: var(--dark); font-size: 17px; line-height: 24px; }
.footer li { line-height: 24px; }
.about .logo { display: block; margin: 8px 0 34px; }
.social { display: flex; align-items: center; gap: 18px; height: 16px; margin-top: 11px; }
.social a { display: flex; }

.newsletter { display: flex; flex-direction: column; align-items: flex-start; gap: 15px; margin-top: 11px; }
.newsletter input {
  width: 100%;
  height: 40px;
  padding: 0 14px;
  border: 1px solid var(--line);
  background: transparent;
}
.newsletter button {
  height: 40px;
  padding: 0 15px;
  background: var(--primary);
  color: #fff;
  font-weight: 700;
}

.copyright { margin-top: 30px; text-align: center; }
.copyright svg { vertical-align: -2px; }
```
